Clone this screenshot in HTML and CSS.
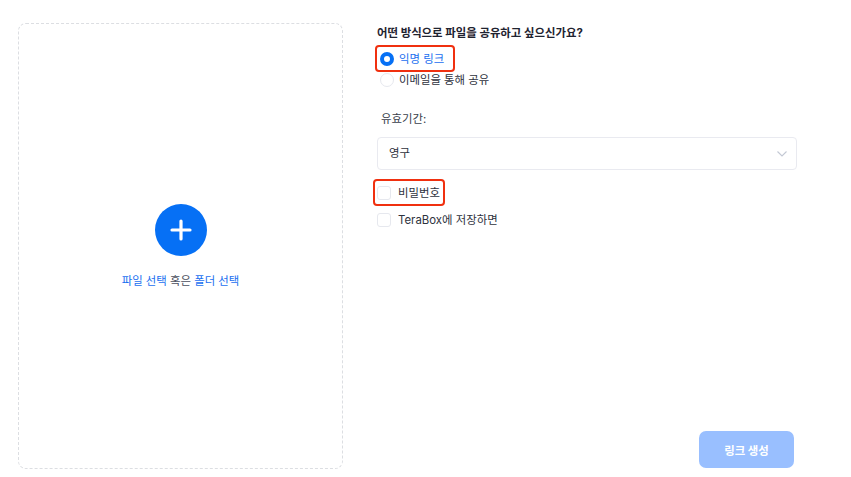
FILE: index.html
```html
<!DOCTYPE html>
<html lang="ko">
<head>
    <meta charset="UTF-8">
    <meta name="viewport" content="width=device-width, initial-scale=1.0">
    <title>파일 공유</title>
    <link rel="stylesheet" href="styles.css">
</head>
<body>

    <div class="page">
        <div class="dropzone">
            <div class="add-button">
                <svg width="24" height="24" viewBox="0 0 24 24">
                    <path d="M12 3v18M3 12h18" stroke="#fff" stroke-width="3.2" stroke-linecap="round" fill="none"/>
                </svg>
            </div>
            <div class="dropzone-text"><span class="link">파일 선택</span> 혹은 <span class="link">폴더 선택</span></div>
        </div>

        <div class="options">
            <div class="question">어떤 방식으로 파일을 공유하고 싶으신가요?</div>

            <div class="radio-row radio-row-first marked">
                <span class="radio radio-on"></span>
                <span class="link">익명 링크</span>
            </div>
            <div class="radio-row">
                <span class="radio"></span>
                <span>이메일을 통해 공유</span>
            </div>

            <div class="expire-label">유효기간:</div>
            <div class="select">
                <span class="select-value">영구</span>
                <svg width="10" height="6" viewBox="0 0 10 6">
                    <path d="M.5.5L5 5 9.5.5" stroke="#c3c8d4" stroke-width="1.1" fill="none"/>
                </svg>
            </div>

            <div class="check-row check-row-first marked">
                <span class="checkbox"></span>
                <span>비밀번호</span>
            </div>
            <div class="check-row">
                <span class="checkbox"></span>
                <span>TeraBox에 저장하면</span>
            </div>

            <div class="actions">
                <button class="create-button">링크 생성</button>
            </div>
        </div>
    </div>

</body>
</html>
```

FILE: styles.css
```css
body {
    margin: 0;
    padding: 0;
    background-color: #ffffff;
    font-family: "Inter", "Noto Sans CJK KR", sans-serif;
    font-size: 11.4px;
    color: #2e323d;
}
.page {
    display: flex;
    width: 851px;
    height: 477px;
    box-sizing: border-box;
    padding: 23px 0 9px 18px;
    overflow: hidden;
}
.link {
    color: #1a6ff0;
}

/* left side */
.dropzone {
    width: 325px;
    height: 446px;
    box-sizing: border-box;
    border: 1px dashed #dcdee2;
    border-radius: 8px;
    display: flex;
    flex-direction: column;
    align-items: center;
    padding-top: 180px;
}
.add-button {
    width: 52px;
    height: 52px;
    border-radius: 50%;
    background-color: #0670f5;
    display: flex;
    justify-content: center;
    align-items: center;
}
.dropzone-text {
    margin-top: 16px;
    line-height: 18px;
    color: #4b5060;
}

/* right side */
.options {
    width: 420px;
    margin-left: 34px;
    display: flex;
    flex-direction: column;
}
.question {
    margin-top: 1px;
    font-weight: 700;
    line-height: 18px;
    color: #1f2330;
}
.radio-row,
.check-row {
    position: relative;
    display: flex;
    align-items: center;
    line-height: 18px;
}
.radio-row {
    gap: 5px;
    margin-top: 3px;
    padding-left: 3px;
}
.radio-row-first {
    margin-top: 8px;
}
.radio {
    width: 14px;
    height: 14px;
    box-sizing: border-box;
    border: 1px solid #e6e8ee;
    border-radius: 50%;
    background-color: #fff;
}
.radio-on {
    border: 4px solid #0670f5;
}
.expire-label {
    margin-top: 21px;
    padding-left: 4px;
    line-height: 18px;
    color: #3a3f4c;
}
.select {
    margin-top: 9px;
    height: 33px;
    box-sizing: border-box;
    border: 1px solid #e9eaf0;
    border-radius: 4px;
    padding: 0 9px 0 11px;
    display: flex;
    justify-content: space-between;
    align-items: center;
}
.select-value {
    margin-bottom: 3px;
}
.check-row {
    gap: 7px;
    margin-top: 9px;
}
.check-row-first {
    margin-top: 14px;
}
.checkbox {
    width: 14px;
    height: 14px;
    box-sizing: border-box;
    border: 1px solid #e6e8ee;
    border-radius: 3px;
    background-color: #fff;
}

/* red annotation box */
.marked::after {
    content: "";
    position: absolute;
    top: -5px;
    bottom: -4px;
    left: -2px;
    border: 2px solid #f0300f;
    border-radius: 4px;
}
.radio-row.marked::after {
    width: 76px;
}
.check-row.marked::after {
    left: -4px;
    width: 68px;
}

.actions {
    margin-top: auto;
    display: flex;
    justify-content: flex-end;
    padding-right: 3px;
}
.create-button {
    width: 95px;
    height: 37px;
    border: none;
    border-radius: 7px;
    background-color: #99bfff;
    color: #ffffff;
    font-family: inherit;
    font-size: 11.4px;
    font-weight: 700;
}
```
